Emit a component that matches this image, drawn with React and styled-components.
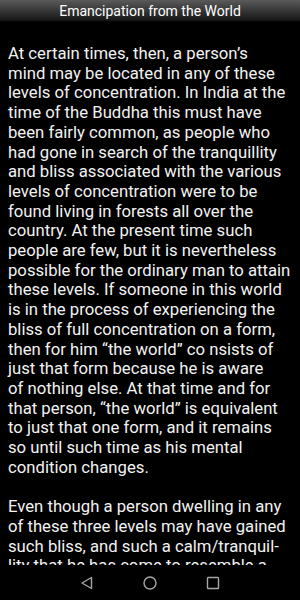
import React from 'react';
import styled, { createGlobalStyle } from 'styled-components';

const GlobalStyle = createGlobalStyle`
    html, body {
        margin: 0;
        padding: 0;
        background: #000;
    }
    body {
        font-family: Roboto, "Noto Sans", sans-serif;
    }
`;

// lines as the reader laid them out on this page
const paragraphs = [
    [
        'At certain times, then, a person\u2019s',
        'mind may be located in any of these',
        'levels of concentration. In India at the',
        'time of the Buddha this must have',
        'been fairly common, as people who',
        'had gone in search of the tranquillity',
        'and bliss associated with the various',
        'levels of concentration were to be',
        'found living in forests all over the',
        'country. At the present time such',
        'people are few, but it is nevertheless',
        'possible for the ordinary man to attain',
        'these levels. If someone in this world',
        'is in the process of experiencing the',
        'bliss of full concentration on a form,',
        'then for him \u201cthe world\u201d co nsists of',
        'just that form because he is aware',
        'of nothing else. At that time and for',
        'that person, \u201cthe world\u201d is equivalent',
        'to just that one form, and it remains',
        'so until such time as his mental',
        'condition changes.',
    ],
    [
        'Even though a person dwelling in any',
        'of these three levels may have gained',
        'such bliss, and such a calm/tranquil-',
        'lity that he has come to resemble a',
    ],
];

/* Components ---------------------------*/
const NavBack = () => (
    <svg width="14" height="14" viewBox="0 0 14 14">
        <path d="M11.5 1.5 L2 7 L11.5 12.5 Z" fill="none" stroke="#a6a6a6" strokeWidth="1.4" strokeLinejoin="round" />
    </svg>
);

const NavHome = () => (
    <svg width="14" height="14" viewBox="0 0 14 14">
        <circle cx="7" cy="7" r="6" fill="none" stroke="#a6a6a6" strokeWidth="1.4" />
    </svg>
);

const NavRecent = () => (
    <svg width="14" height="14" viewBox="0 0 14 14">
        <rect x="1.5" y="1.5" width="11" height="11" rx="0.8" fill="none" stroke="#a6a6a6" strokeWidth="1.4" />
    </svg>
);

const App = () => {

    return (
        <Screen>
            <GlobalStyle />
            <TitleBar>Emancipation from the World</TitleBar>
            <Reader>
                <Article>
                    {paragraphs.map((lines, i) => (
                        <Paragraph key={i}>
                            {lines.map((line, j) => (
                                <Line key={j}>{line}</Line>
                            ))}
                        </Paragraph>
                    ))}
                </Article>
            </Reader>
            <NavBar>
                <NavButton><NavBack /></NavButton>
                <NavButton><NavHome /></NavButton>
                <NavButton><NavRecent /></NavButton>
            </NavBar>
        </Screen>
    );
}

export default App;

const Screen = styled.div`
    width: 300px;
    height: 600px;
    display: flex;
    flex-direction: column;
    background: #000;
    overflow: hidden;
`;

const TitleBar = styled.header`
    flex: 0 0 21px;
    display: flex;
    align-items: center;
    justify-content: center;
    background: linear-gradient(to bottom, #5a5a5a 0%, #333 55%, #141414 100%);
    color: #fff;
    font-size: 14px;
    white-space: nowrap;
`;

const Reader = styled.main`
    flex: 1;
    overflow: hidden;
`;

const Article = styled.article`
    padding: 23px 8px 0 8px;
`;

const Paragraph = styled.p`
    margin: 0 0 19.7px 0;
    color: #f2f2f2;
    font-size: 16.7px;
    line-height: 19.7px;
`;

const Line = styled.span`
    display: block;
    white-space: nowrap;
`;

const NavBar = styled.nav`
    flex: 0 0 35px;
    display: flex;
    align-items: center;
    justify-content: center;
    gap: 49px;
    background: #000;
`;

const NavButton = styled.div`
    display: flex;
    align-items: center;
    justify-content: center;
    width: 14px;
    height: 14px;
`;
